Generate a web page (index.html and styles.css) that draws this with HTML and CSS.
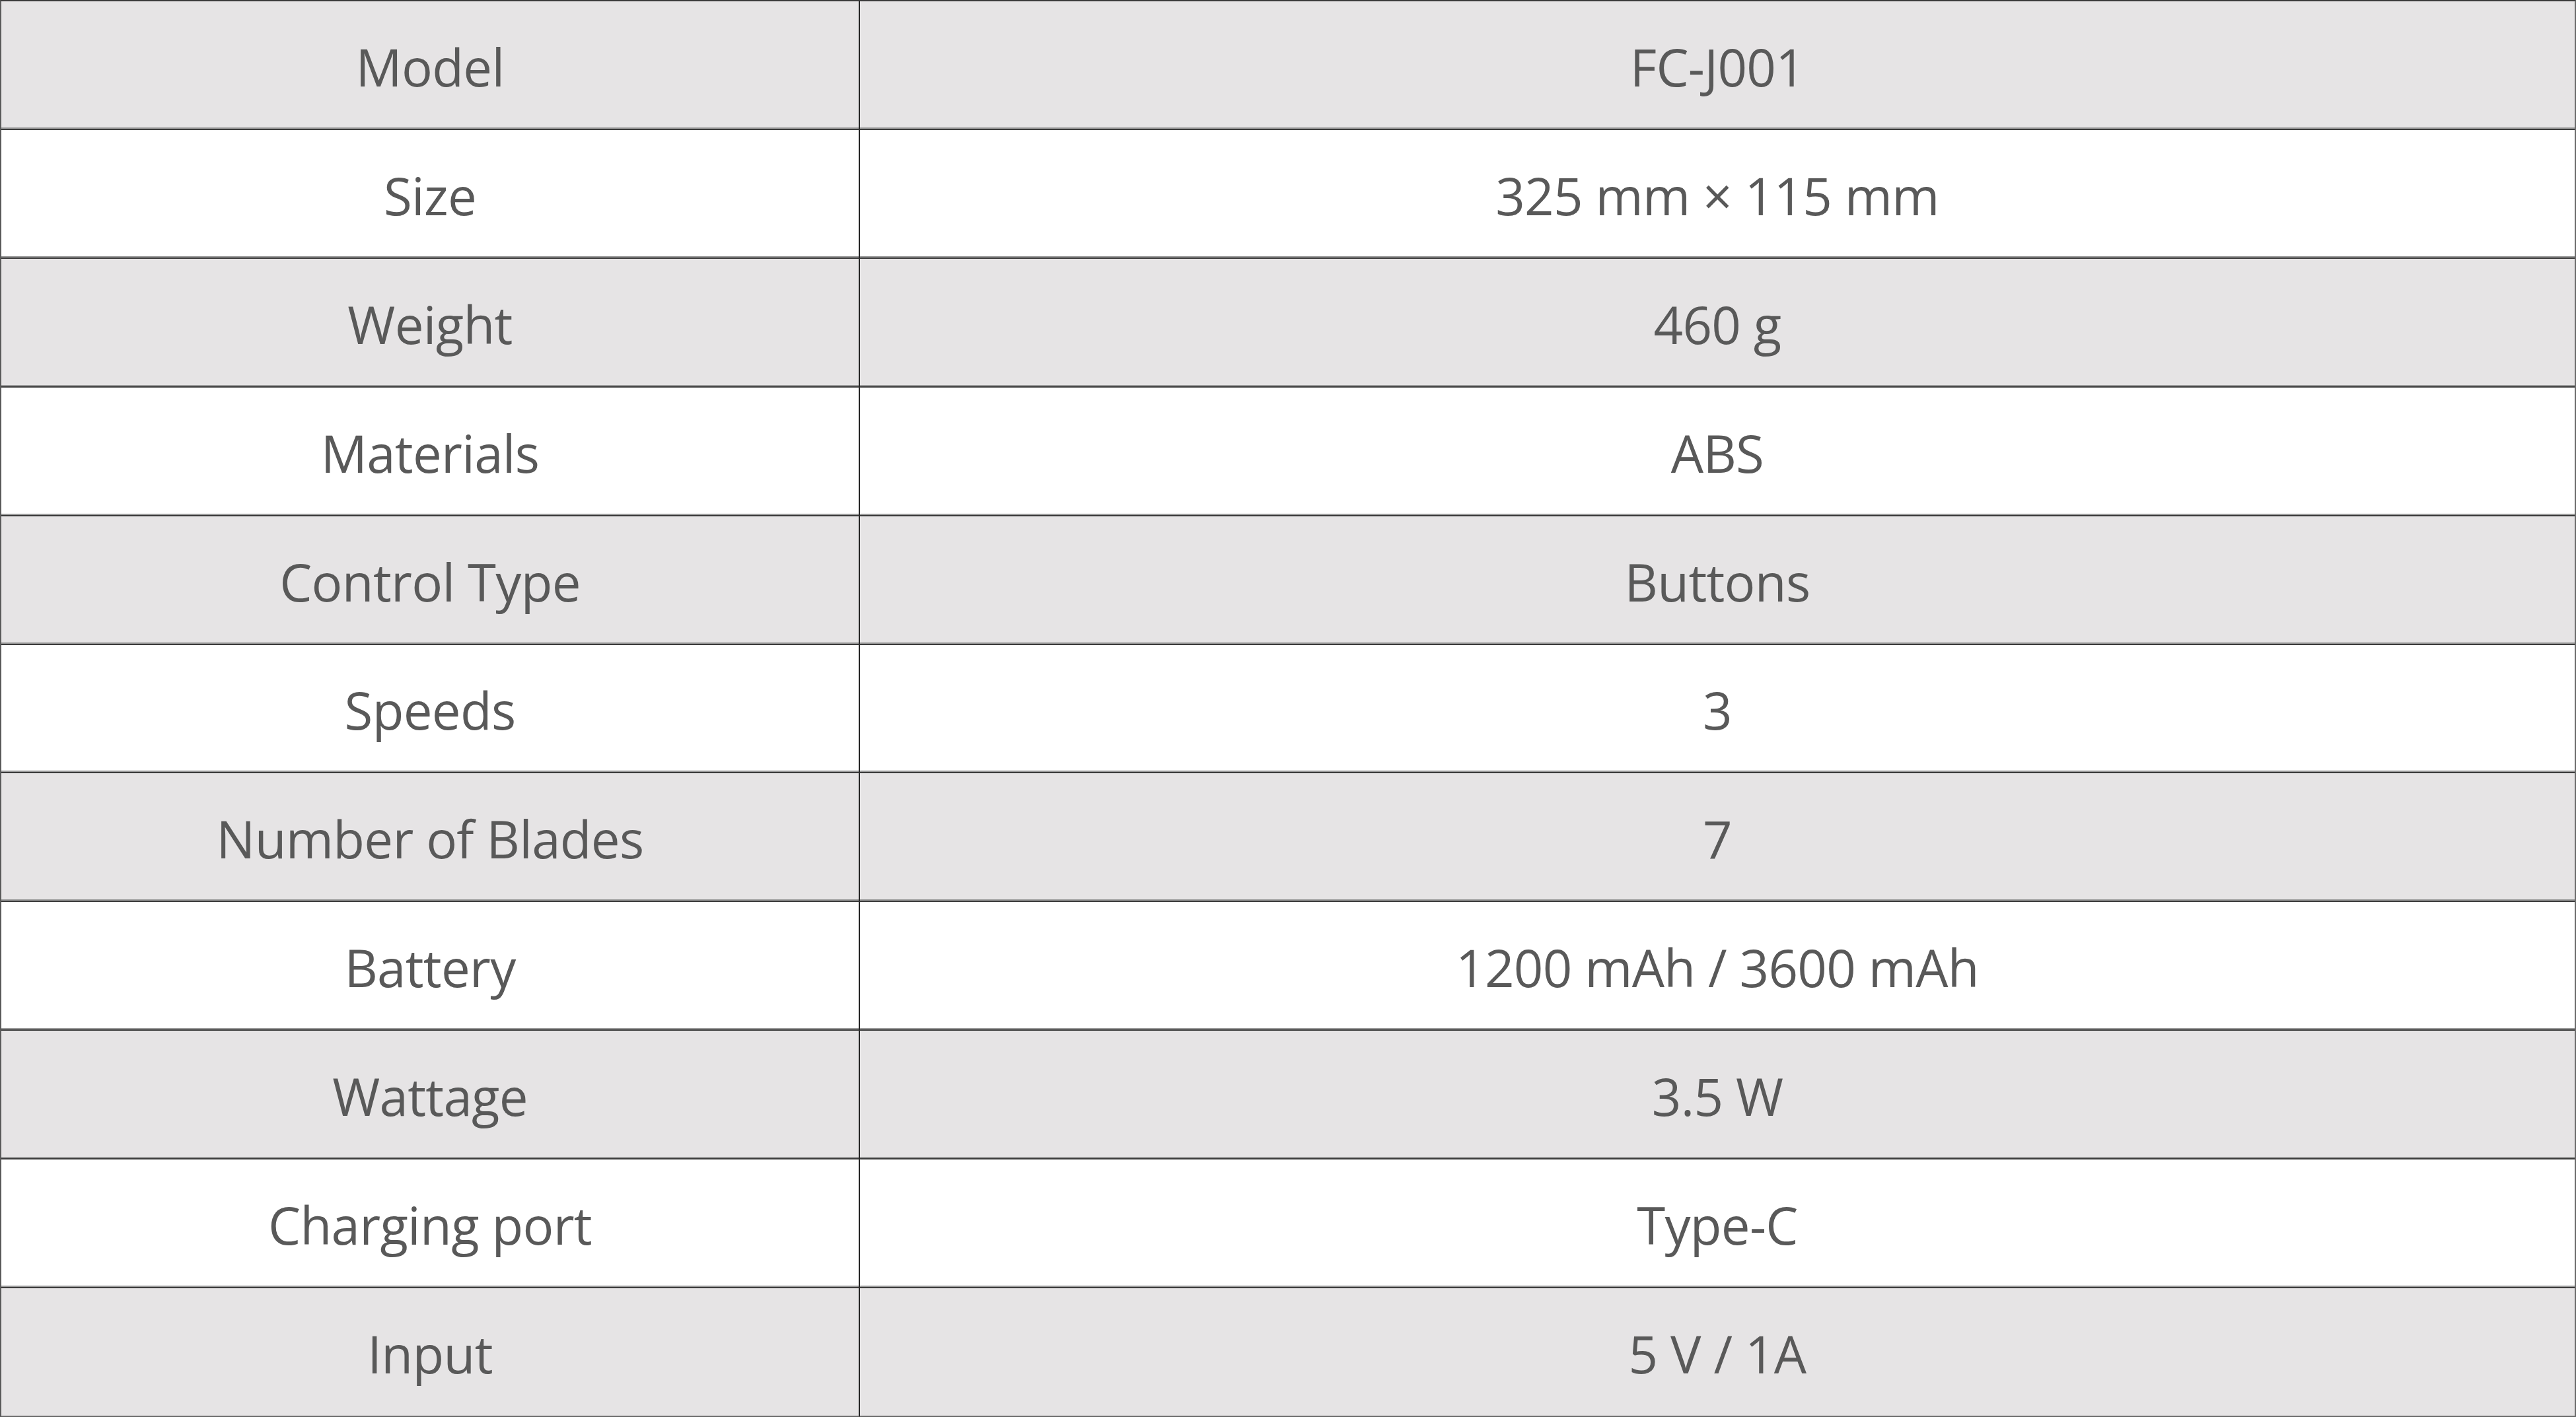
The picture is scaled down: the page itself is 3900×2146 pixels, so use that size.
FILE: index.html
```html
<!DOCTYPE html>
<html lang="en">
<head>
<meta charset="utf-8">
<title>Specifications</title>
<link rel="stylesheet" href="styles.css">
</head>
<body>
<div class="spec">
  <div class="cell key shade">Model</div><div class="cell val shade">FC-J001</div>
  <div class="cell key">Size</div><div class="cell val">325 mm × 115 mm</div>
  <div class="cell key shade">Weight</div><div class="cell val shade">460 g</div>
  <div class="cell key">Materials</div><div class="cell val">ABS</div>
  <div class="cell key shade">Control Type</div><div class="cell val shade">Buttons</div>
  <div class="cell key">Speeds</div><div class="cell val">3</div>
  <div class="cell key shade">Number of Blades</div><div class="cell val shade">7</div>
  <div class="cell key">Battery</div><div class="cell val">1200 mAh / 3600 mAh</div>
  <div class="cell key shade">Wattage</div><div class="cell val shade">3.5 W</div>
  <div class="cell key">Charging port</div><div class="cell val">Type-C</div>
  <div class="cell key shade last">Input</div><div class="cell val shade last">5 V / 1A</div>
</div>
</body>
</html>
```
FILE: styles.css
```css
html, body {
  margin: 0;
  padding: 0;
  background: #ffffff;
}
.spec {
  box-sizing: border-box;
  width: 3900px;
  height: 2146px;
  display: grid;
  grid-template-columns: 1300px 1fr;
  grid-template-rows: repeat(11, 1fr);
  border-top: 2px solid #3a3a3a;
  border-left: 2px solid #5a5a5a;
  border-right: 2px solid #6a6a6a;
  font-family: "Open Sans", "Noto Sans", sans-serif;
  font-size: 78px;
  letter-spacing: -0.7px;
  color: #595959;
}
.cell {
  display: flex;
  align-items: center;
  justify-content: center;
  padding-top: 5px;
  background: #ffffff;
  border-bottom: 2px solid #3c3c3c;
  box-shadow: inset 0 -2px 0 #9a9a9a;
  white-space: nowrap;
}
.cell.shade {
  background: #e6e4e5;
}
.cell.last {
  border-bottom: 2px solid #6a6a6a;
  box-shadow: none;
}
.key {
  border-right: 2px solid #262626;
}
```
